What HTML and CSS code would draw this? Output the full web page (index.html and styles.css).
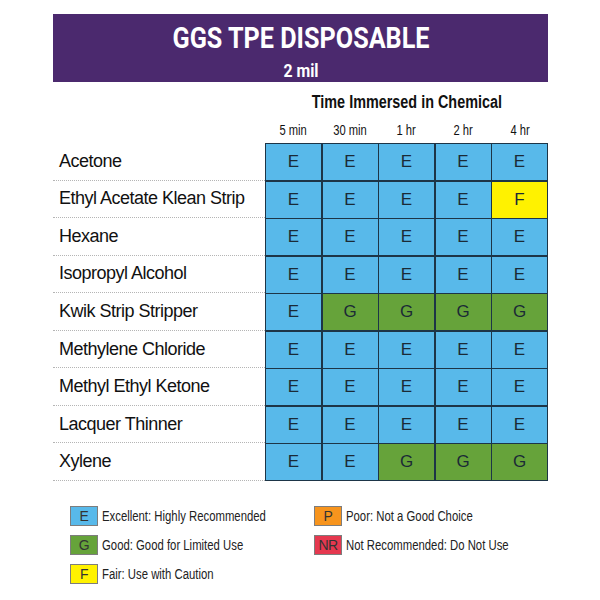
FILE: index.html
```html
<!DOCTYPE html>
<html>
<head>
<meta charset="utf-8">
<link rel="stylesheet" href="styles.css">
</head>
<body>
<div class="page">
  <div class="banner">
    <div class="title"><span>GGS TPE DISPOSABLE</span></div>
    <div class="subtitle"><span>2 mil</span></div>
  </div>
  <div class="time-title"><span>Time Immersed in Chemical</span></div>
  <div class="colheads">
    <div><span>5 min</span></div><div><span>30 min</span></div><div><span>1 hr</span></div><div><span>2 hr</span></div><div><span>4 hr</span></div>
  </div>
  <div class="chart">
    <div class="labels">
      <div class="label">Acetone</div>
      <div class="label">Ethyl Acetate Klean Strip</div>
      <div class="label">Hexane</div>
      <div class="label">Isopropyl Alcohol</div>
      <div class="label">Kwik Strip Stripper</div>
      <div class="label">Methylene Chloride</div>
      <div class="label">Methyl Ethyl Ketone</div>
      <div class="label">Lacquer Thinner</div>
      <div class="label">Xylene</div>
    </div>
    <div class="grid">
      <div class="cell e">E</div><div class="cell e">E</div><div class="cell e">E</div><div class="cell e">E</div><div class="cell e">E</div>
      <div class="cell e">E</div><div class="cell e">E</div><div class="cell e">E</div><div class="cell e">E</div><div class="cell f">F</div>
      <div class="cell e">E</div><div class="cell e">E</div><div class="cell e">E</div><div class="cell e">E</div><div class="cell e">E</div>
      <div class="cell e">E</div><div class="cell e">E</div><div class="cell e">E</div><div class="cell e">E</div><div class="cell e">E</div>
      <div class="cell e">E</div><div class="cell g">G</div><div class="cell g">G</div><div class="cell g">G</div><div class="cell g">G</div>
      <div class="cell e">E</div><div class="cell e">E</div><div class="cell e">E</div><div class="cell e">E</div><div class="cell e">E</div>
      <div class="cell e">E</div><div class="cell e">E</div><div class="cell e">E</div><div class="cell e">E</div><div class="cell e">E</div>
      <div class="cell e">E</div><div class="cell e">E</div><div class="cell e">E</div><div class="cell e">E</div><div class="cell e">E</div>
      <div class="cell e">E</div><div class="cell e">E</div><div class="cell g">G</div><div class="cell g">G</div><div class="cell g">G</div>
    </div>
  </div>
  <div class="legend">
    <div class="item"><span class="sw e">E</span><span class="txt">Excellent: Highly Recommended</span></div>
    <div class="item"><span class="sw p">P</span><span class="txt">Poor: Not a Good Choice</span></div>
    <div class="item"><span class="sw g">G</span><span class="txt">Good: Good for Limited Use</span></div>
    <div class="item"><span class="sw nr">NR</span><span class="txt">Not Recommended: Do Not Use</span></div>
    <div class="item"><span class="sw f">F</span><span class="txt">Fair: Use with Caution</span></div>
  </div>
</div>
</body>
</html>
```
FILE: styles.css
```css
html, body {
  margin: 0;
  padding: 0;
  background: #ffffff;
}
body {
  font-family: "Liberation Sans", Arial, sans-serif;
  color: #1a1a1a;
}
.page {
  width: 495px;
  padding: 14px 0 0 53px;
}
.banner {
  height: 68px;
  box-sizing: border-box;
  background: #4b296e;
  padding-top: 7px;
  color: #ffffff;
  text-align: center;
}
.title {
  font-family: Roboto, "Liberation Sans", sans-serif;
  font-weight: 700;
  font-size: 30px;
  line-height: 34px;
}
.title span,
.subtitle span,
.time-title span,
.colheads span {
  display: inline-block;
  transform: scaleX(0.84);
}
.subtitle {
  margin-top: 5px;
  font-family: Roboto, "Liberation Sans", sans-serif;
  font-weight: 700;
  font-size: 18px;
  line-height: 21px;
}
.subtitle span {
  transform: scaleX(0.88);
}
.time-title {
  margin: 10px 0 0 212px;
  width: 283px;
  text-align: center;
  font-weight: 700;
  font-size: 18px;
  line-height: 20px;
  color: #111;
}
.time-title span {
  transform: scaleX(0.8);
  white-space: nowrap;
}
.colheads {
  margin: 10px 0 0 212px;
  width: 283px;
  display: grid;
  grid-template-columns: repeat(5, 1fr);
  text-align: center;
  font-size: 14px;
  line-height: 16px;
  height: 21px;
  color: #111;
}
.colheads span {
  transform: scaleX(0.8);
  white-space: nowrap;
}
.chart {
  display: flex;
}
.labels {
  width: 212px;
}
.label {
  height: 37.56px;
  box-sizing: border-box;
  border-bottom: 1px dotted #b5b5b5;
  padding-left: 6px;
  display: flex;
  align-items: center;
  font-size: 18px;
  letter-spacing: -0.5px;
  color: #111;
}
.grid {
  width: 283px;
  height: 338px;
  box-sizing: border-box;
  display: grid;
  grid-template-columns: repeat(5, 1fr);
  grid-template-rows: repeat(9, 1fr);
  gap: 1.5px;
  background: #1d3547;
  border: 1.5px solid #1d3547;
}
.cell {
  display: flex;
  align-items: center;
  justify-content: center;
  font-size: 17px;
  color: #1b2a36;
}
.e { background: #58b9ea; }
.g { background: #66a33a; }
.f { background: #fff200; }
.p { background: #f7941d; }
.nr { background: #e5384f; }
.legend {
  margin: 25px 0 0 17px;
  display: grid;
  grid-template-columns: 244px auto;
  row-gap: 9px;
}
.item {
  display: flex;
  align-items: center;
  height: 20px;
  white-space: nowrap;
}
.sw {
  width: 28px;
  height: 20px;
  box-sizing: border-box;
  border: 1px solid #7d7d7d;
  display: flex;
  align-items: center;
  justify-content: center;
  font-size: 14px;
  letter-spacing: -0.5px;
  color: #333;
}
.txt {
  display: inline-block;
  margin-left: 4px;
  font-size: 14px;
  color: #222;
  transform: scaleX(0.81);
  transform-origin: left center;
}
```
